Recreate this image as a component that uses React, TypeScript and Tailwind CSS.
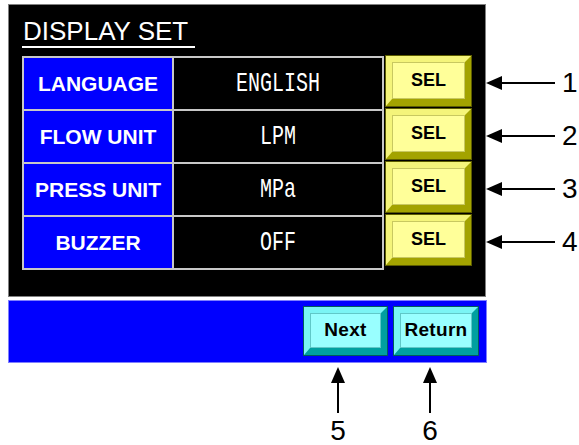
import type { ReactNode } from 'react';

const rows = [
    { label: 'LANGUAGE', value: 'ENGLISH', n: '1' },
    { label: 'FLOW UNIT', value: 'LPM', n: '2' },
    { label: 'PRESS UNIT', value: 'MPa', n: '3' },
    { label: 'BUZZER', value: 'OFF', n: '4' },
];

const sans = "font-['Liberation_Sans',Arial,sans-serif]";

/** Yellow bevelled HMI key. */
function SelKey() {
    return (
        <div className="flex h-[52px] w-[87px] border border-[#5c5c00] bg-[#ffff99]">
            <div className="flex flex-1 border-[6px] border-b-[7px] border-t-[#f4f47a] border-l-[#f4f47a] border-b-[#a3a300] border-r-[#a3a300]">
                <div className={`flex flex-1 items-center justify-center border border-[#c8c860] bg-[#ffff99] text-[18px] font-bold text-black ${sans}`}>
                    SEL
                </div>
            </div>
        </div>
    );
}

/** Cyan bevelled key for the bottom bar. */
function CyanKey({ children, w }: { children: ReactNode; w: string }) {
    return (
        <div className={`flex h-[50px] ${w} border border-[#005c5c] bg-[#99ffff]`}>
            <div className="flex flex-1 border-[6px] border-b-[7px] border-t-[#7af4f4] border-l-[#7af4f4] border-b-[#00a0a0] border-r-[#00a0a0]">
                <div className={`flex flex-1 items-center justify-center border border-[#60c8c8] bg-[#99ffff] text-[19px] font-bold tracking-[0.3px] text-black ${sans}`}>
                    {children}
                </div>
            </div>
        </div>
    );
}

function ArrowLeft() {
    return (
        <svg width="70" height="16" viewBox="0 0 70 16">
            <line x1="12" y1="8" x2="69" y2="8" stroke="#000" strokeWidth="2" />
            <polygon points="0,8 16,1 16,15" fill="#000" />
        </svg>
    );
}

function ArrowUp() {
    return (
        <svg width="16" height="46" viewBox="0 0 16 46">
            <line x1="8" y1="12" x2="8" y2="46" stroke="#000" strokeWidth="2" />
            <polygon points="8,0 1,16 15,16" fill="#000" />
        </svg>
    );
}

export default function App() {
    return (
        <div className={`h-[445px] w-[579px] bg-white pl-[8px] pt-[4px] ${sans}`}>
            <div className="flex">
                {/* Display set panel */}
                <div className="h-[293px] w-[478px] border border-[#808080] bg-black pl-[13px] pt-[13px]">
                    <div className="w-[173px] border-b-2 border-white pb-[2px] pl-[1px] text-[26px] leading-[26px] text-white">
                        DISPLAY SET
                    </div>
                    <div className="mt-[8px] flex items-start">
                        <div className="w-[362px] border-l-2 border-t-2 border-[#c8c8c8]">
                            {rows.map(r => (
                                <div key={r.label} className="flex h-[53px]">
                                    <div className="flex w-[150px] items-center justify-center border-b-2 border-r-2 border-[#c8c8c8] bg-[#0000ff] text-[21px] font-bold text-white">
                                        {r.label}
                                    </div>
                                    <div className="flex flex-1 items-center justify-center border-b-2 border-r-2 border-[#c8c8c8] text-white">
                                        <span className="inline-block scale-y-[1.4] font-['Liberation_Mono',monospace] text-[20px] leading-none">
                                            {r.value}
                                        </span>
                                    </div>
                                </div>
                            ))}
                        </div>
                        <div className="-mt-[1px] ml-[1px] flex flex-col gap-[1px]">
                            {rows.map(r => <SelKey key={r.n} />)}
                        </div>
                    </div>
                </div>

                {/* Callouts 1-4 */}
                <div className="mt-[52px] flex flex-col">
                    {rows.map(r => (
                        <div key={r.n} className="flex h-[53px] items-center">
                            <ArrowLeft />
                            <span className="ml-[6px] text-[28px] leading-[28px] text-black">{r.n}</span>
                        </div>
                    ))}
                </div>
            </div>

            {/* Bottom bar */}
            <div className="mt-[3px] flex h-[63px] w-[479px] justify-end gap-[5px] border border-[#7f7fff] bg-[#0000ff] pr-[7px] pt-[5px]">
                <CyanKey w="w-[85px]">Next</CyanKey>
                <CyanKey w="w-[86px]">Return</CyanKey>
            </div>

            {/* Callouts 5-6 */}
            <div className="ml-[315px] mt-[4px] flex gap-[62px]">
                {['5', '6'].map(n => (
                    <div key={n} className="flex w-[30px] flex-col items-center">
                        <ArrowUp />
                        <span className="mt-[7px] text-[28px] leading-[22px] text-black">{n}</span>
                    </div>
                ))}
            </div>
        </div>
    );
}
